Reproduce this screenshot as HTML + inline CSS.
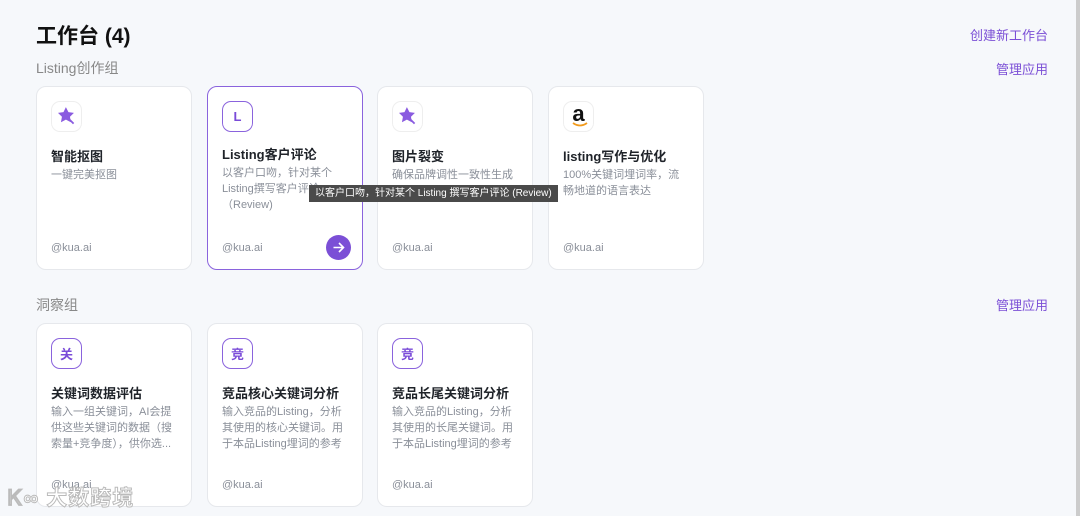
<!DOCTYPE html>
<html><head><meta charset="utf-8"><style>
*{margin:0;padding:0;box-sizing:border-box}
body{width:1080px;height:516px;overflow:hidden;background:#f6f8fb;font-family:"Liberation Sans","Noto Sans CJK SC",sans-serif;position:relative;color:#1f2329}
.abs{position:absolute}
h1{position:absolute;left:36px;top:20px;font-size:21px;font-weight:700;color:#111}
.grp{position:absolute;left:36px;font-size:14px;color:#888}
.link{position:absolute;font-size:13px;color:#7b4fd6}
.card{position:absolute;width:156px;height:184px;background:#fff;border:1px solid #e6e8ec;border-radius:10px}
.card.act{border-color:#8a63dd}
.ic{position:absolute;left:14px;top:14px;width:31px;height:31px;border-radius:9px;display:flex;align-items:center;justify-content:center}
.ic.l{border:1.5px solid #8a63dd;color:#7a4bd8;font-size:13px;font-weight:700}
.ic.w{border:1px solid #eee;background:#fff}
.t{position:absolute;left:14px;top:59px;font-size:13px;font-weight:700;color:#1f2329;white-space:nowrap}
.d{position:absolute;left:14px;top:80px;width:124px;font-size:11px;line-height:16px;color:#8a8f99}
.f{position:absolute;left:14px;top:155px;font-size:11px;color:#8a8f99}
.go{position:absolute;right:11px;top:148px;width:25px;height:25px;border-radius:50%;background:#7b4fd6;color:#fff;display:flex;align-items:center;justify-content:center}
.tip{position:absolute;left:309px;top:185px;background:#4a4a4a;color:#fff;font-size:10px;padding:2px 6px;height:17px;line-height:13px;white-space:nowrap}
</style></head><body>
<h1>工作台 (4)</h1>
<div class="link" style="left:970px;top:25px">创建新工作台</div>
<div class="grp" style="top:58px">Listing创作组</div>
<div class="link" style="left:996px;top:59px">管理应用</div>

<div class="card" style="left:36px;top:86px">
 <div class="ic w"><svg width="22" height="22" viewBox="0 0 20 20"><path d="M9 1l2.3 4.6 5 .7-3.6 3.5.8 5L9 12.4 4.5 14.8l.9-5L1.8 6.3l5-.7z" fill="#8a5be0"/><path d="M12 12l4 4" stroke="#8a5be0" stroke-width="1.6"/></svg></div>
 <div class="t">智能抠图</div><div class="d">一键完美抠图</div><div class="f">@kua.ai</div></div>
<div class="card act" style="left:207px;top:86px">
 <div class="ic l">L</div>
 <div class="t" style="top:57px">Listing客户评论</div><div class="d" style="top:78px">以客户口吻，针对某个Listing撰写客户评论（Review)</div><div class="f">@kua.ai</div>
 <div class="go"><svg width="13" height="13" viewBox="0 0 13 13"><path d="M1.5 6.5h10M7 2l4.5 4.5L7 11" stroke="#fff" stroke-width="1.6" fill="none"/></svg></div></div>
<div class="card" style="left:377px;top:86px">
 <div class="ic w"><svg width="22" height="22" viewBox="0 0 20 20"><path d="M9 1l2.3 4.6 5 .7-3.6 3.5.8 5L9 12.4 4.5 14.8l.9-5L1.8 6.3l5-.7z" fill="#8a5be0"/><path d="M12 12l4 4" stroke="#8a5be0" stroke-width="1.6"/></svg></div>
 <div class="t">图片裂变</div><div class="d">确保品牌调性一致性生成</div><div class="f">@kua.ai</div></div>
<div class="card" style="left:548px;top:86px">
 <div class="ic w"><span style="font-size:22px;font-weight:700;color:#111;margin-top:-6px">a</span><svg class="abs" style="left:8px;top:20px" width="16" height="6" viewBox="0 0 16 6"><path d="M1 1q7 5 14 0" stroke="#f29b1d" stroke-width="1.8" fill="none"/></svg></div>
 <div class="t">listing写作与优化</div><div class="d">100%关键词埋词率，流畅地道的语言表达</div><div class="f">@kua.ai</div></div>
<div class="tip">以客户口吻，针对某个 Listing 撰写客户评论 (Review)</div>

<div class="grp" style="top:295px">洞察组</div>
<div class="link" style="left:996px;top:295px">管理应用</div>
<div class="card" style="left:36px;top:323px">
 <div class="ic l">关</div>
 <div class="t">关键词数据评估</div><div class="d">输入一组关键词，AI会提供这些关键词的数据（搜索量+竞争度），供你选...</div><div class="f">@kua.ai</div></div>
<div class="card" style="left:207px;top:323px">
 <div class="ic l">竞</div>
 <div class="t">竞品核心关键词分析</div><div class="d">输入竞品的Listing，分析其使用的核心关键词。用于本品Listing埋词的参考</div><div class="f">@kua.ai</div></div>
<div class="card" style="left:377px;top:323px">
 <div class="ic l">竞</div>
 <div class="t">竞品长尾关键词分析</div><div class="d">输入竞品的Listing，分析其使用的长尾关键词。用于本品Listing埋词的参考</div><div class="f">@kua.ai</div></div>
<div class="abs" style="left:8px;top:482px;font-size:21px;font-weight:700;color:#fff;-webkit-text-stroke:1px #bbb;letter-spacing:1px">Ꮶ∞ 大数跨境</div>
<div class="abs" style="left:1076px;top:0;width:4px;height:516px;background:#ccc"></div>
</body></html>
